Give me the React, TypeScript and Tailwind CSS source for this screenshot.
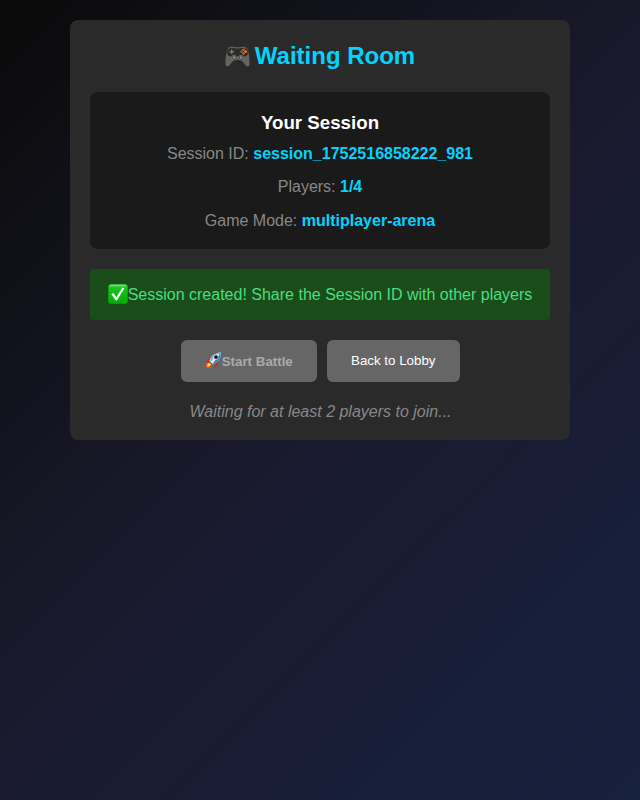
function Gamepad() {
  return (
    <svg className="mr-[5px] h-[21px] w-[25px] shrink-0" viewBox="0 0 25 22" preserveAspectRatio="none" fill="none">
      <path d="M3 2.500C5 .5 8.500.6 10 1.600h5c1.500-1 5-1 7 .9 2 4 2.700 10 2.500 16.500-.1 2.800-2.600 3-4 1.200l-4.500-5.700H9l-4.500 5.700C3 22 .6 21.600.5 19 .3 12.500 1 6.500 3 2.500Z" fill="#65645f" />
      <path d="M3.300 3C5.500.9 8.500 1.200 10 2.200h5c1.500-1 4.700-1.200 6.700.8 1.900 3.500 1.500 7.500-1.700 8H5C1.800 10.500 1.400 6.500 3.300 3Z" fill="#2c2c28" />
      <path d="M3.500 2.700C5.500.9 8.500 1.100 10 2h5c1.500-1 4.500-1.200 6.500.7" stroke="#77736a" strokeWidth=".8" />
      <path d="M6.700 3.600v4.800M4.300 6h4.800" stroke="#85877d" strokeWidth="1.200" />
      <circle cx="18.500" cy="3.900" r="1.400" fill="#d9611c" />
      <circle cx="20.600" cy="5.900" r="1.500" fill="#f26b2b" />
      <circle cx="18.500" cy="7.900" r="1.300" fill="#d85d27" />
      <circle cx="16.500" cy="5.900" r="1.200" fill="#a06a50" />
      <circle cx="9" cy="12.300" r="2.500" fill="#373936" stroke="#818179" strokeWidth=".7" />
      <circle cx="16" cy="12.300" r="2.500" fill="#373936" stroke="#818179" strokeWidth=".7" />
      <circle cx="9" cy="12.100" r="1.300" fill="#8f9696" />
      <circle cx="16" cy="12.100" r="1.300" fill="#8f9696" />
    </svg>
  );
}

function CheckBadge() {
  return (
    <svg className="mb-[1px] h-5 w-5 shrink-0" viewBox="0 0 20 20" fill="none">
      <defs>
        <linearGradient id="badge" x1="0" y1="0" x2="0" y2="1">
          <stop stopColor="#65d565" />
          <stop offset=".2" stopColor="#16c51b" />
          <stop offset="1" stopColor="#00ad05" />
        </linearGradient>
      </defs>
      <rect x=".4" y=".4" width="19.200" height="19.200" rx="2.700" fill="url(#badge)" stroke="#22a126" strokeWidth=".5" />
      <path d="M2 1.200h16" stroke="#86de82" strokeWidth="1" />
      <path d="m3.300 10.200 2-1.100 3.100 4.200 6-9.800 1.900 1-7.400 12-1.100.1Z" fill="white" />
    </svg>
  );
}

function Rocket() {
  return (
    <svg className="h-[17px] w-[17px] shrink-0" viewBox="0 0 17 17" fill="none">
      <path d="m5 6-4.200 4.200 4.200.2 2-3.900ZM10.500 11l-1.100 5 3-3.200.1-3.500Z" fill="#e51b13" />
      <path d="m4.200 10-3.300 1.500.6.700L.4 15.300l2-.4-.2 1.600 3-.7 2.700-3.800Z" fill="#f35a18" />
      <path d="m4.500 10.800-2.300 1.800.5.800-.8 1.500 2-.6 2.700-2.200Z" fill="#ffe33b" />
      <path d="M4.200 9.700C5.500 4.500 9.500 1 16 .5c.5 6-3.500 10.500-9 12.200Z" fill="#dbe7eb" />
      <path d="M4.200 9.700C5.500 4.500 9.500 1 16 .5L12 2.200 6 9.500Z" fill="#8ab7d0" />
      <path d="m7 12.700 9-12.200c.6 6-3.500 10.500-9 12.200Z" fill="#3285c4" />
      <path d="M12.500 1.200 16 .5l-.2 3Z" fill="#55b5e5" />
      <circle cx="10.800" cy="5.200" r="2.500" fill="#e2e6e7" />
      <circle cx="11" cy="5.100" r="1.900" fill="#360c15" />
      <path d="m4.400 9.200 3.300 3-.8.9-3.300-3Z" fill="#3e4e59" />
    </svg>
  );
}

const details = [
  { label: "Session ID:", value: "session_1752516858222_981" },
  { label: "Players:", value: "1/4" },
  { label: "Game Mode:", value: "multiplayer-arena" },
];

export default function App() {
  return (
    <main className="min-h-screen bg-[linear-gradient(135deg,#0a0a0a_0%,#1a1a2e_50%,#16213e_100%)] p-5 font-['Liberation_Sans',Arial,sans-serif] text-white">
      <section className="mx-auto h-[420px] w-[500px] rounded-lg bg-[#2a2a2a] p-5 text-center">
        <h1 className="mb-5 flex h-[31.5px] items-start justify-center pt-[2px] text-2xl leading-7 font-bold text-[#00d4ff]">
          <span className="pt-[4px]"><Gamepad /></span>
          Waiting Room
        </h1>
        <div className="h-[157.5px] rounded-lg bg-[#1a1a1a] pt-5">
          <h2 className="text-[18.72px] leading-[22px] font-bold">Your Session</h2>
          <div className="mt-[11.2px] flex flex-col gap-[15.5px]">
            {details.map((d) => (
              <p key={d.label} className="text-base leading-[18px] text-[#888888]">
                {d.label} <strong className="text-[#00d4ff]">{d.value}</strong>
              </p>
            ))}
          </div>
        </div>
        <div className="mt-5 flex h-[51px] items-center justify-center rounded bg-[#1b4d1b] text-base text-[#4ade80]">
          <CheckBadge />
          <span>Session created! Share the Session ID with other players</span>
        </div>
        <div className="mt-5 flex justify-center gap-[10px]">
          <button disabled className="flex h-[41.5px] w-[136.5px] items-center justify-center rounded-md bg-[#666666] text-[13.333px] font-bold text-[#aaaaaa]">
            <Rocket />
            <span className="pt-[2px]">Start Battle</span>
          </button>
          <button className="h-[41.5px] w-[132.5px] rounded-md bg-[#666666] text-[13.333px] text-white">Back to Lobby</button>
        </div>
        <p className="mt-[21px] pl-[1px] text-base leading-[18px] text-[#888888] italic">Waiting for at least 2 players to join...</p>
      </section>
    </main>
  );
}
